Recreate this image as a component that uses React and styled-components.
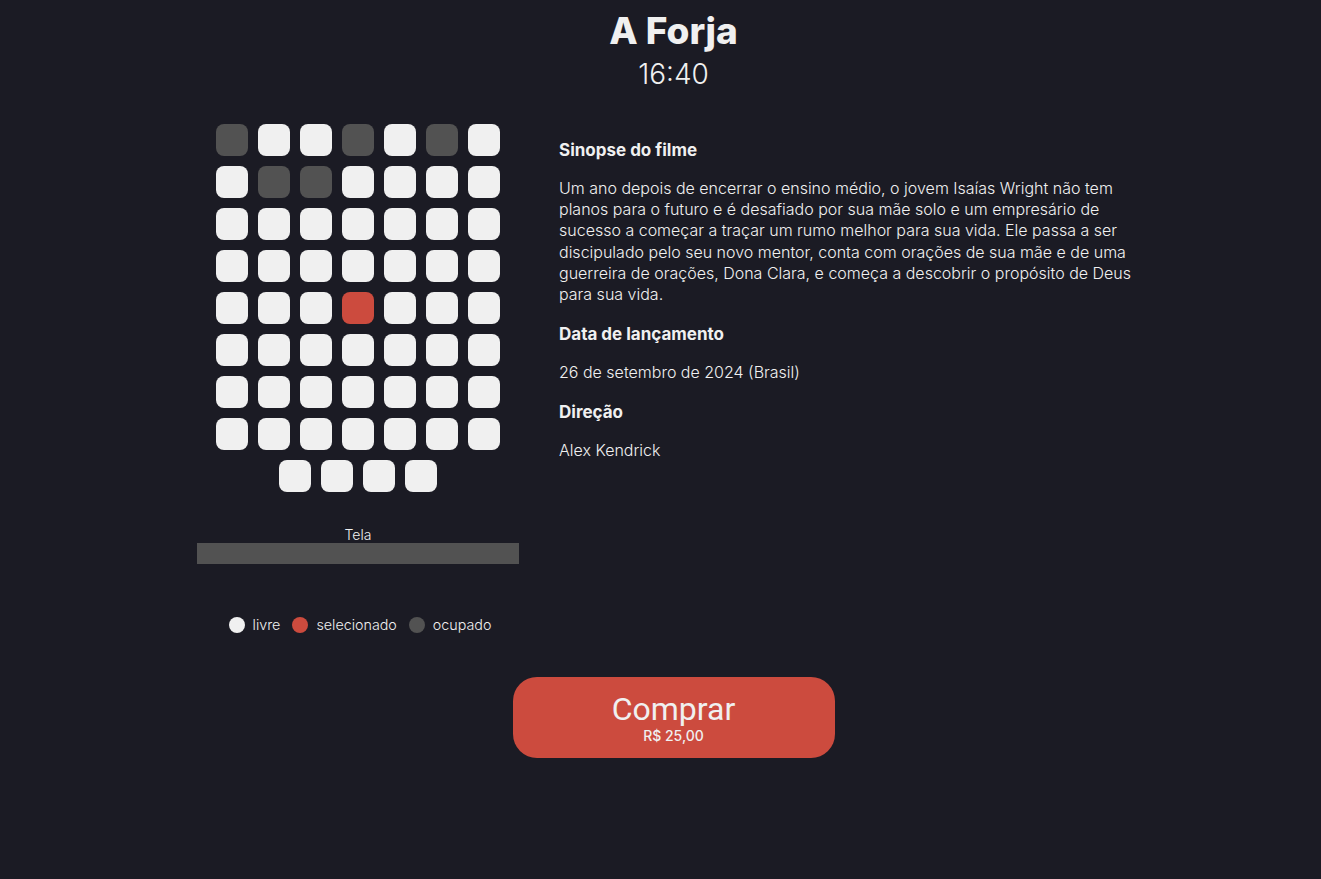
import React from "react";
import styled, { createGlobalStyle } from "styled-components";

const Global = createGlobalStyle`
  html, body { margin: 0; padding: 0; background: #1b1b24; }
  body { font-family: Inter, "Noto Sans", sans-serif; color: #f0f0f0; }
`;

const light = `"Inter Light", Inter, "Noto Sans", sans-serif`;

const Page = styled.div`
  min-height: 879px;
  display: flex;
  flex-direction: column;
  align-items: center;
  padding-top: 8px;
  box-sizing: border-box;
`;

const Header = styled.div`
  display: flex;
  flex-direction: column;
  align-items: center;
  margin-left: 26px;
`;

const Title = styled.h1`
  margin: 0;
  font-size: 37px;
  font-weight: 800;
  line-height: 46px;
`;

const Time = styled.div`
  margin-top: 2px;
  font-family: ${light};
  font-size: 28px;
  font-weight: 300;
  line-height: 36px;
`;

const Main = styled.div`
  display: flex;
  gap: 40px;
  margin-top: 32px;
  margin-left: 13px;
`;

const Left = styled.div`
  width: 322px;
  display: flex;
  flex-direction: column;
  align-items: center;
`;

const SeatGrid = styled.div`
  display: flex;
  flex-direction: column;
  gap: 10px;
  align-items: center;
`;

const SeatRow = styled.div`
  display: flex;
  gap: 10px;
`;

const colors = { free: "#f0f0f0", selected: "#cc4b3e", taken: "#525252" };

const Seat = styled.div`
  width: 32px;
  height: 32px;
  border-radius: 8px;
  background: ${(p) => colors[p.$state]};
`;

const ScreenLabel = styled.div`
  margin-top: 34px;
  font-family: ${light};
  font-size: 14px;
  font-weight: 300;
  line-height: 17px;
`;

const ScreenBar = styled.div`
  width: 322px;
  height: 21px;
  background: #525252;
`;

const Legend = styled.div`
  display: flex;
  align-items: center;
  margin-top: 52px;
  margin-left: 4px;
  font-family: ${light};
  font-size: 14.3px;
  font-weight: 300;
`;

const LegendItem = styled.div`
  display: flex;
  align-items: center;
  gap: 8px;
  margin-right: 12px;
  &:last-child { margin-right: 0; }
`;

const Dot = styled.span`
  width: 16px;
  height: 16px;
  border-radius: 50%;
  background: ${(p) => colors[p.$state]};
`;

const Right = styled.div`
  width: 578px;
  padding-top: 16px;
`;

const Heading = styled.h3`
  margin: 0;
  font-size: 17px;
  font-weight: 700;
  line-height: 20px;
`;

const Text = styled.p`
  margin: 18px 0 19px;
  font-family: ${light};
  font-size: 16px;
  font-weight: 300;
  line-height: 21.2px;
`;

const BuyButton = styled.button`
  margin-top: 44px;
  margin-left: 26px;
  width: 322px;
  height: 81px;
  border: none;
  border-radius: 24px;
  background: #cc4b3e;
  color: #f0f0f0;
  font-family: Roboto, Inter, sans-serif;
  display: flex;
  flex-direction: column;
  align-items: center;
  justify-content: center;
  cursor: pointer;
`;

const BuyLabel = styled.span`
  font-size: 32px;
  font-weight: 400;
  line-height: 36px;
`;

const Price = styled.span`
  font-family: Inter, sans-serif;
  font-size: 14px;
  font-weight: 500;
  line-height: 18px;
`;

const rows = [
  ["taken", "free", "free", "taken", "free", "taken", "free"],
  ["free", "taken", "taken", "free", "free", "free", "free"],
  ["free", "free", "free", "free", "free", "free", "free"],
  ["free", "free", "free", "free", "free", "free", "free"],
  ["free", "free", "free", "selected", "free", "free", "free"],
  ["free", "free", "free", "free", "free", "free", "free"],
  ["free", "free", "free", "free", "free", "free", "free"],
  ["free", "free", "free", "free", "free", "free", "free"],
  ["free", "free", "free", "free"],
];

export default function App() {
  return (
    <>
      <Global />
      <Page>
        <Header>
          <Title>A Forja</Title>
          <Time>16:40</Time>
        </Header>
        <Main>
          <Left>
            <SeatGrid>
              {rows.map((r, i) => (
                <SeatRow key={i}>
                  {r.map((s, j) => (
                    <Seat key={j} $state={s} />
                  ))}
                </SeatRow>
              ))}
            </SeatGrid>
            <ScreenLabel>Tela</ScreenLabel>
            <ScreenBar />
            <Legend>
              <LegendItem><Dot $state="free" />livre</LegendItem>
              <LegendItem><Dot $state="selected" />selecionado</LegendItem>
              <LegendItem><Dot $state="taken" />ocupado</LegendItem>
            </Legend>
          </Left>
          <Right>
            <Heading>Sinopse do filme</Heading>
            <Text>
              Um ano depois de encerrar o ensino médio, o jovem Isaías Wright não tem planos para o futuro e é desafiado por sua mãe solo e um empresário de sucesso a começar a traçar um rumo melhor para sua vida. Ele passa a ser discipulado pelo seu novo mentor, conta com orações de sua mãe e de uma guerreira de orações, Dona Clara, e começa a descobrir o propósito de Deus para sua vida.
            </Text>
            <Heading>Data de lançamento</Heading>
            <Text>26 de setembro de 2024 (Brasil)</Text>
            <Heading>Direção</Heading>
            <Text>Alex Kendrick</Text>
          </Right>
        </Main>
        <BuyButton>
          <BuyLabel>Comprar</BuyLabel>
          <Price>R$ 25,00</Price>
        </BuyButton>
      </Page>
    </>
  );
}
